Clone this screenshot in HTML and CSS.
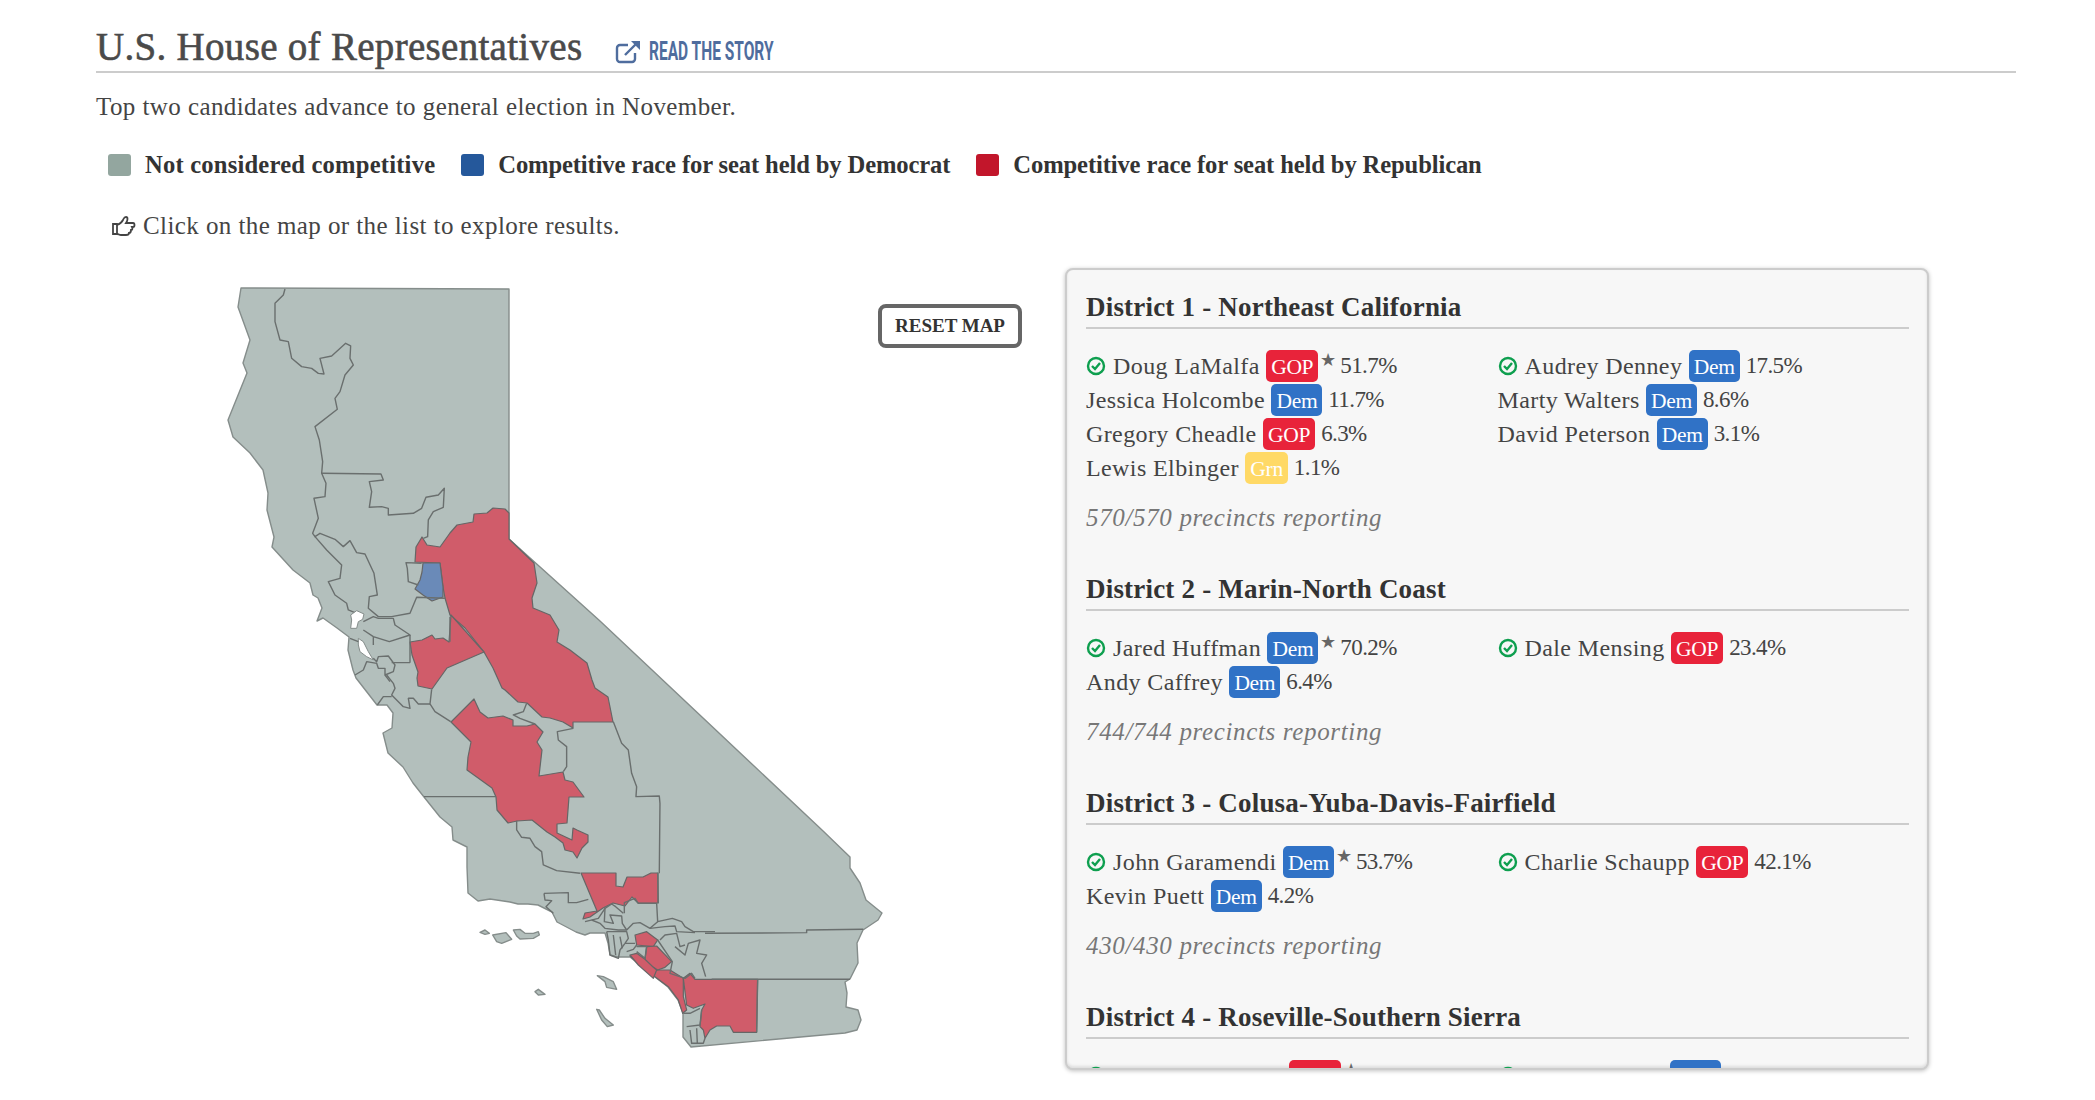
FILE: index.html
```html
<html>
  <head>
    <meta charset="UTF-8">
    <title>U.S. House of Representatives</title>
    <link rel="stylesheet" href="styles.css">
  </head>

  <body>
    <div class="section-head">
      <h2>U.S. House of Representatives</h2>
      <a class="story-link">
        <svg class="story-icon" viewBox="0 0 26 24"><path d="M20 13v6a3 3 0 0 1-3 3H5a3 3 0 0 1-3-3V8a3 3 0 0 1 3-3h8"/><path d="M10 15 23 2"/><path class="solid" d="M16 1h9v9z"/></svg>
        <span class="story-text">READ THE STORY</span>
      </a>
    </div>

    <p class="note">Top two candidates advance to general election in November.</p>

    <div class="legend">
      <div class="legend-item"><span class="swatch swatch-gray"></span>Not considered competitive</div>
      <div class="legend-item"><span class="swatch swatch-blue"></span>Competitive race for seat held by Democrat</div>
      <div class="legend-item"><span class="swatch swatch-red"></span>Competitive race for seat held by Republican</div>
    </div>

    <p class="hint">
      <svg class="hand-icon" viewBox="0 0 24 20"><path d="M1 8h4v10H1z"/><path d="M5 9c3-1 5-3 6-5 1-2 1-3 3-3s2 3 0 6h7c2 0 2 4 0 4h-1c1 2 0 3-1 3 0 2-1 3-2 3 0 1-1 2-3 2H9c-2 0-2-1-4-1"/></svg>
      Click on the map or the list to explore results.
    </p>

    <div class="results">
      <div class="map-col">
        <svg class="map" viewBox="225 280 680 780">
          <path class="state" d="M241,288 L509,289 L509,539 L600,621 L822,830 L850,857 L850,868 L860,883 L866,900 L882,913 L878,920 L863,930 L857,943 L858,963 L850,979 L845,982 L847,993 L846,1007 L858,1010 L861,1020 L857,1030 L845,1033 L691,1047 L683,1037 L683,1013 L678,1000 L668,987 L655,977 L630,957 L618,957 L610,955 L608,943 L605,933 L590,933 L585,935 L576,932 L557,922 L552,912 L538,905 L528,904 L518,904 L510,902 L490,899 L478,901 L468,893 L467,867 L467,847 L453,840 L452,827 L440,817 L424,797 L413,783 L403,767 L388,753 L383,733 L392,728 L393,713 L387,705 L377,705 L356,678 L353,670 L348,650 L349,637 L337,628 L323,618 L317,621 L322,608 L318,598 L313,595 L310,583 L293,570 L272,547 L274,537 L267,510 L268,493 L263,470 L250,453 L233,437 L228,420 L247,373 L243,363 L250,340 L238,307 Z"/>

          <!-- competitive districts -->
          <path class="red" d="M415,562 L416,547 L422,537 L427,545 L440,547 L450,533 L457,525 L473,522 L474,514 L487,513 L493,508 L505,509 L509,513 L509,539 L534,563 L537,583 L532,598 L533,608 L550,615 L559,630 L557,642 L570,650 L587,663 L592,680 L595,688 L608,697 L613,722 L573,722 L573,728 L563,722 L550,718 L542,717 L527,703 L518,702 L505,690 L502,688 L493,668 L484,652 L465,628 L450,615 L445,598 L443,587 L440,563 Z"/>
          <path class="blue" d="M423,563 L440,563 L443,587 L443,597 L432,601 L423,595 L415,589 L420,580 L422,572 Z"/>
          <path class="red" d="M410,642 L422,640 L432,635 L435,639 L443,638 L449,642 L451,615 L484,652 L447,668 L432,689 L418,686 L417,678 L418,672 L412,655 Z"/>
          <path class="red" d="M451,722 L474,699 L480,712 L488,718 L503,716 L513,720 L513,726 L527,726 L535,724 L543,732 L537,742 L542,750 L539,776 L563,772 L565,780 L573,782 L584,797 L569,797 L567,823 L557,824 L557,833 L572,840 L573,828 L577,830 L588,835 L588,842 L582,848 L577,858 L573,852 L565,850 L563,843 L555,837 L547,832 L532,820 L517,821 L508,823 L497,810 L496,797 L492,788 L467,770 L468,757 L471,742 Z"/>
          <path class="red" d="M581,873 L616,873 L616,886 L623,887 L627,877 L643,877 L651,873 L658,873 L658,903 L638,903 L632,897 L625,906 L613,903 L603,908 L590,917 L583,919 L585,913 L597,911 Z"/>

          <g transform="translate(590 780) scale(.3333)">
            <path class="red" d="M120,528 L165,543 L195,570 L240,570 L280,595 L280,650 L290,690 L278,700 L265,660 L235,620 L195,590 Z"/>
            <path class="red" d="M280,595 L300,580 L315,598 L503,598 L500,757 L430,757 L420,738 L380,738 L360,750 L345,775 L340,750 L330,740 L335,690 L345,672 L310,685 L290,675 Z"/>
            <path class="line" d="M365,598 L780,598 M503,598 L500,757"/>
            <path class="line" d="M280,700 L300,700 L330,685 M290,740 L330,735 L335,690 M300,750 L305,790 L340,790 L345,775 M320,745 L322,790"/>
            <path class="line" d="M203,278 L205,370"/>
            <path class="line" d="M345,460 L650,458 L650,450 L820,448"/>
          </g>

          <!-- los angeles and orange county -->
          <g transform="translate(585 880) scale(.3333)">
            <path class="red" d="M150,165 L185,155 L218,180 L205,200 L155,195 Z"/>
            <path class="red" d="M185,200 L215,198 L260,245 L240,262 L218,270 L205,262 L180,238 Z"/>
            <path class="red" d="M135,225 L155,220 L180,238 L205,262 L215,270 L205,295 L160,255 Z"/>
            <path class="line" d="M0,125 L40,115 L60,85 L80,72 L92,80 L115,100"/>
            <path class="line" d="M118,100 L118,68 L150,55 L160,70 L215,70 L218,125 L262,115 L290,125 L300,140 L325,155 L390,155"/>
            <path class="line" d="M60,85 L58,125 L85,130 L75,105 L110,108 L112,130 L125,150"/>
            <path class="line" d="M20,120 L45,130 L60,145 L100,150 L125,150 L145,130 L165,128 L195,145 L218,125"/>
            <path class="line" d="M195,145 L240,140 L270,138 L275,155 L330,158"/>
            <path class="line" d="M65,155 L125,155 L130,175 L120,190 L105,210 L100,235 L75,225 L70,180 L65,155"/>
            <path class="line" d="M85,165 L92,225 M105,170 L112,205 M120,190 L150,190 M125,215 L145,208 L155,195 M155,200 L185,200 L180,235 L155,215"/>
            <path class="line" d="M225,180 L240,165 L275,160 L285,200 L300,195 M270,200 L300,225 L310,190 L345,180 L335,220 L365,225 L350,250 L362,290"/>
            <path class="line" d="M218,180 L262,245 L255,280 L300,295 L320,280 L330,295"/>
          </g>

          <!-- district lines, north -->
          <g transform="translate(200 270) scale(.3333)">
            <path class="line" d="M255,57 L250,75 L225,100 L225,155 L240,210 L265,215 L275,265 L305,290 L335,295 L355,310 L372,312 L360,265 L395,258 L437,220 L452,228 L450,265 L460,285 L435,315 L420,365 L405,385 L412,418 L345,470 L358,510 L368,575 L365,610 L378,640 L375,680 L342,685 L355,745 L338,790 L345,800 L360,790 L405,808 L430,830 L450,812 L470,848 L495,852 L522,910 L532,975 L508,980 L505,1015 L535,1040 L575,1040 L630,1030 L650,982 L735,985"/>
            <path class="line" d="M345,800 L380,840 L425,885 L420,925 L385,935 L405,975 L440,1000 L445,1020 L470,1030"/>
            <path class="line" d="M365,610 L543,612 L550,630 L508,635 L515,665 L508,712 L545,710 L565,715 L565,735 L640,730 L665,715 L678,682 L715,675 L733,655 L730,712 L700,725 L685,750 L683,800 L670,805"/>
            <path class="line" d="M665,880 L618,878 L622,895 L625,935 L655,945"/>
            <path class="line" d="M750,1040 L750,1115"/>
          </g>

          <!-- district lines, central valley -->
          <g transform="translate(350 600) scale(.3333)">
            <path class="line" d="M110,225 L130,250 L135,265 L125,285 L160,320 L180,325 L175,295 L190,295 L205,312 L240,312"/>
            <path class="line" d="M245,268 L240,312 L255,335 L302,365"/>
            <path class="line" d="M82,315 L100,290 L125,290"/>
            <path class="line" d="M222,590 L438,590"/>
            <path class="line" d="M500,662 L500,690 L515,712 L540,715 L555,740 L575,755 L580,795 L620,812 L690,820"/>
            <path class="line" d="M530,310 L520,335 L490,345 L510,355 L555,372"/>
            <path class="line" d="M670,385 L622,395 L625,420 L650,440 L650,500 L640,515"/>
            <path class="line" d="M790,365 L815,430 L835,450 L845,520 L860,560 L858,590 L928,588 L930,610 L928,820"/>
          </g>

          <!-- channel islands -->
          <g transform="translate(470 880) scale(.3333)">
            <path class="island" d="M30,157 L45,150 L58,160 L45,163 Z"/>
            <path class="island" d="M68,165 L108,158 L125,178 L95,190 L80,185 Z"/>
            <path class="island" d="M130,150 L150,148 L165,160 L190,160 L205,155 L208,165 L190,175 L150,177 L140,168 Z"/>
            <path class="island" d="M382,287 L400,290 L430,305 L440,328 L410,322 L405,305 Z"/>
            <path class="island" d="M195,335 L205,328 L225,343 L205,345 Z"/>
            <path class="island" d="M380,388 L388,390 L405,415 L430,435 L412,440 L395,420 Z"/>
            <path class="line" d="M222,40 L295,38 L295,68 L320,68 L355,58 M222,40 L225,60 L245,62 L228,80 L250,100"/>
          </g>

          <!-- san francisco bay -->
          <g transform="translate(330 590) scale(.3333)">
            <path class="bay" d="M62,75 L80,62 L102,72 L98,88 L85,95 L80,115 L62,115 L65,90 Z"/>
            <path class="bay" d="M85,145 L100,155 L115,185 L130,210 L110,200 L90,185 L85,165 Z"/>
            <path class="line" d="M100,95 L130,80 L145,85 L190,85 L195,105 L240,135 L178,155 L130,140 L100,120 M130,140 L130,165"/>
            <path class="line" d="M130,205 L140,215 L145,200 L175,198 L195,225 L190,245 L165,255 L165,235 L145,235 L140,220 L110,215 L100,240 L75,255"/>
            <path class="line" d="M185,218 L240,218 M240,135 L240,218 M165,255 L180,275 M60,145 L85,155"/>
          </g>
        </svg>
        <button class="reset-btn">RESET MAP</button>
      </div>

      <div class="panel">
        <div class="district">
          <h3>District 1 - Northeast California</h3>
          <div class="candidates">
            <div class="cand"><svg class="check" viewBox="0 0 20 20"><circle cx="10" cy="10" r="8"/><path d="M6 10l3 3 5-6"/></svg>Doug LaMalfa <span class="badge gop">GOP</span><span class="star">★</span><span class="pct">51.7%</span></div>
            <div class="cand"><svg class="check" viewBox="0 0 20 20"><circle cx="10" cy="10" r="8"/><path d="M6 10l3 3 5-6"/></svg>Audrey Denney <span class="badge dem">Dem</span><span class="pct">17.5%</span></div>
            <div class="cand">Jessica Holcombe <span class="badge dem">Dem</span><span class="pct">11.7%</span></div>
            <div class="cand">Marty Walters <span class="badge dem">Dem</span><span class="pct">8.6%</span></div>
            <div class="cand">Gregory Cheadle <span class="badge gop">GOP</span><span class="pct">6.3%</span></div>
            <div class="cand">David Peterson <span class="badge dem">Dem</span><span class="pct">3.1%</span></div>
            <div class="cand">Lewis Elbinger <span class="badge grn">Grn</span><span class="pct">1.1%</span></div>
          </div>
          <div class="precincts">570/570 precincts reporting</div>
        </div>

        <div class="district">
          <h3>District 2 - Marin-North Coast</h3>
          <div class="candidates">
            <div class="cand"><svg class="check" viewBox="0 0 20 20"><circle cx="10" cy="10" r="8"/><path d="M6 10l3 3 5-6"/></svg>Jared Huffman <span class="badge dem">Dem</span><span class="star">★</span><span class="pct">70.2%</span></div>
            <div class="cand"><svg class="check" viewBox="0 0 20 20"><circle cx="10" cy="10" r="8"/><path d="M6 10l3 3 5-6"/></svg>Dale Mensing <span class="badge gop">GOP</span><span class="pct">23.4%</span></div>
            <div class="cand">Andy Caffrey <span class="badge dem">Dem</span><span class="pct">6.4%</span></div>
          </div>
          <div class="precincts">744/744 precincts reporting</div>
        </div>

        <div class="district">
          <h3>District 3 - Colusa-Yuba-Davis-Fairfield</h3>
          <div class="candidates">
            <div class="cand"><svg class="check" viewBox="0 0 20 20"><circle cx="10" cy="10" r="8"/><path d="M6 10l3 3 5-6"/></svg>John Garamendi <span class="badge dem">Dem</span><span class="star">★</span><span class="pct">53.7%</span></div>
            <div class="cand"><svg class="check" viewBox="0 0 20 20"><circle cx="10" cy="10" r="8"/><path d="M6 10l3 3 5-6"/></svg>Charlie Schaupp <span class="badge gop">GOP</span><span class="pct">42.1%</span></div>
            <div class="cand">Kevin Puett <span class="badge dem">Dem</span><span class="pct">4.2%</span></div>
          </div>
          <div class="precincts">430/430 precincts reporting</div>
        </div>

        <div class="district">
          <h3>District 4 - Roseville-Southern Sierra</h3>
          <div class="candidates">
            <div class="cand"><svg class="check" viewBox="0 0 20 20"><circle cx="10" cy="10" r="8"/><path d="M6 10l3 3 5-6"/></svg>Tom McClintock <span class="badge gop">GOP</span><span class="star">★</span><span class="pct">52.4%</span></div>
            <div class="cand"><svg class="check" viewBox="0 0 20 20"><circle cx="10" cy="10" r="8"/><path d="M6 10l3 3 5-6"/></svg>Jessica Morse <span class="badge dem">Dem</span><span class="pct">18.9%</span></div>
          </div>
        </div>
      </div>
    </div>
  </body>
</html>
```

FILE: styles.css
```css
body {
  margin: 0;
  padding: 0 79px 0 96px;
  font-family: "Liberation Serif", serif;
  color: #444;
  background: white;
}

.section-head {
  display: flex;
  align-items: baseline;
  height: 71px;
  border-bottom: 2px solid #ccc;
}

.section-head h2 {
  margin: 24px 0 0;
  font-size: 39px;
  line-height: 46px;
  font-weight: normal;
  letter-spacing: 0.3px;
  -webkit-text-stroke: 0.6px #4a4a4a;
  color: #4a4a4a;
}

.story-link {
  display: flex;
  align-items: baseline;
  margin-left: 33px;
  color: #4f6d9e;
}

.story-icon {
  width: 26px;
  height: 24px;
  fill: none;
  stroke: #4f6d9e;
  stroke-width: 2.4;
  align-self: center;
}

.story-icon .solid {
  fill: #4f6d9e;
  stroke: none;
}

.story-text {
  display: inline-block;
  width: 122px;
  margin-left: 8px;
  font-family: Roboto, sans-serif;
  font-size: 25px;
  font-weight: bold;
  white-space: nowrap;
  transform: scaleX(0.62);
  transform-origin: left;
}

.note {
  margin: 19px 0 0;
  font-size: 25px;
  line-height: 30px;
  letter-spacing: 0.42px;
}

.legend {
  display: flex;
  margin: 27px 0 0 12px;
  font-size: 24.6px;
  line-height: 32px;
  font-weight: bold;
  color: #333;
  letter-spacing: -0.12px;
}

.legend-item {
  display: flex;
  align-items: center;
  margin-right: 26px;
}

.legend-item:first-child {
  letter-spacing: 0.2px;
}

.swatch {
  width: 23px;
  height: 22px;
  margin-right: 14px;
  border-radius: 3px;
}

.swatch-gray { background-color: #93a69f; }
.swatch-blue { background-color: #25589b; }
.swatch-red { background-color: #c2162b; }

.hint {
  display: flex;
  align-items: center;
  margin: 30px 0 0 16px;
  font-size: 25px;
  line-height: 30px;
  letter-spacing: 0.42px;
}

.hand-icon {
  width: 24px;
  height: 20px;
  margin-right: 7px;
  fill: none;
  stroke: #444;
  stroke-width: 1.8;
}

.results {
  display: flex;
  margin-top: 27px;
}

.map-col {
  position: relative;
  width: 969px;
  height: 802px;
}

.map {
  display: block;
  width: 680px;
  height: 780px;
  margin: 12px 0 0 129px;
}

.map path {
  stroke-linejoin: round;
  vector-effect: non-scaling-stroke;
}

.state, .island {
  fill: #b3bfbc;
  stroke: #858d8b;
  stroke-width: 1.4;
}

.red {
  fill: #d05c6a;
  stroke: #666;
  stroke-width: 1.2;
}

.blue {
  fill: #6a8ab8;
  stroke: #666;
  stroke-width: 1.2;
}

.line {
  fill: none;
  stroke: #6a6f6e;
  stroke-width: 1.4;
}

.bay {
  fill: white;
  stroke: #858d8b;
  stroke-width: 1;
}

.reset-btn {
  position: absolute;
  top: 36px;
  left: 782px;
  width: 144px;
  height: 44px;
  padding: 0;
  background: white;
  border: 4px solid #666;
  border-radius: 8px;
  font-family: "Liberation Serif", serif;
  font-size: 19px;
  font-weight: bold;
  color: #333;
}

.panel {
  width: 864px;
  height: 802px;
  box-sizing: border-box;
  padding: 17px 18px 0 19px;
  overflow: hidden;
  background-color: #f7f7f7;
  border: 2px solid #ccc;
  border-radius: 8px;
  box-shadow: 0 1px 4px rgba(0, 0, 0, 0.25), inset 0 -2px 3px rgba(0, 0, 0, 0.1);
}

.district {
  margin-bottom: 34px;
}

.district h3 {
  height: 40px;
  margin: 0;
  border-bottom: 2px solid #ccc;
  font-size: 27px;
  line-height: 40px;
  font-weight: bold;
  color: #333;
  letter-spacing: 0.2px;
}

.candidates {
  display: grid;
  grid-template-columns: 50% 50%;
  margin-top: 20px;
  font-size: 24px;
  letter-spacing: 0.4px;
}

.cand {
  display: flex;
  align-items: center;
  height: 34px;
  white-space: pre;
}

.check {
  width: 20px;
  height: 20px;
  margin-right: 7px;
  fill: none;
  stroke: #0e9f4f;
  stroke-width: 2.4;
}

.badge {
  height: 32px;
  padding: 0 5px;
  border-radius: 5px;
  font-size: 21.5px;
  line-height: 34px;
  letter-spacing: -0.3px;
  color: white;
}

.gop { background-color: #e8233a; }
.dem { background-color: #3072c6; }
.grn { background-color: #ffd966; }

.star {
  align-self: flex-start;
  margin-left: 2px;
  font-size: 18px;
  line-height: 22px;
  color: #666;
  letter-spacing: 0;
}

.pct {
  margin-left: 6px;
  font-size: 23px;
  letter-spacing: -0.6px;
}

.star + .pct {
  margin-left: 4px;
}

.precincts {
  margin-top: 16px;
  font-size: 25px;
  line-height: 34px;
  font-style: italic;
  color: #777;
  letter-spacing: 0.65px;
}
```
